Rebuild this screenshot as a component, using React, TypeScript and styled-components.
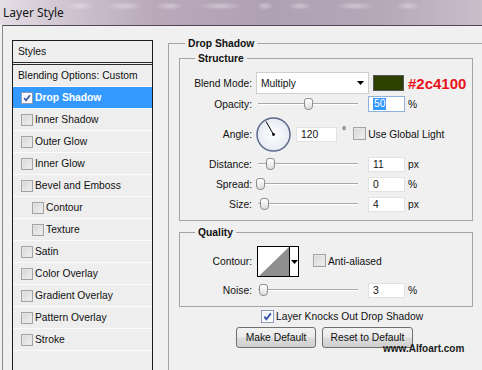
import React from "react";
import styled, { createGlobalStyle } from "styled-components";

const GlobalStyle = createGlobalStyle`
  html, body { margin: 0; padding: 0; background: #f0f0f0; overflow: hidden; }
  * { box-sizing: border-box; }
`;

const UI = `"Liberation Sans", Arial, sans-serif`;

const Window = styled.div`
  position: relative;
  width: 482px;
  height: 370px;
  overflow: hidden;
  display: flex;
  flex-direction: column;
  background: #f0f0f0;
  font-family: ${UI};
  font-size: 10.3px;
  color: #111;
`;

const TitleBar = styled.div`
  height: 25px;
  flex: none;
  display: flex;
  align-items: center;
  padding-left: 3px;
  background:
    radial-gradient(ellipse 14px 4px at 80px 6px, rgba(235, 228, 238, 0.55), transparent),
    radial-gradient(ellipse 18px 4px at 125px 6px, rgba(235, 228, 238, 0.55), transparent),
    radial-gradient(ellipse 14px 4px at 170px 6px, rgba(235, 228, 238, 0.5), transparent),
    radial-gradient(ellipse 22px 4px at 220px 6px, rgba(235, 228, 238, 0.5), transparent),
    radial-gradient(ellipse 8px 4px at 265px 6px, rgba(235, 228, 238, 0.5), transparent),
    radial-gradient(ellipse 12px 4px at 300px 6px, rgba(235, 228, 238, 0.5), transparent),
    radial-gradient(ellipse 20px 4px at 355px 6px, rgba(235, 228, 238, 0.5), transparent),
    radial-gradient(ellipse 12px 4px at 408px 6px, rgba(235, 228, 238, 0.5), transparent),
    linear-gradient(90deg, #e4dee5 0%, #d2c7d3 12%, #b9a9bb 32%, #b0a0b3 55%, #b5a6b8 78%, #c9bdca 100%);
  font-family: "Noto Sans", "Open Sans", sans-serif;
  font-size: 12px;
  color: #151515;
`;

const Frame = styled.div`
  flex: 1;
  margin-left: 2px;
  border-top: 1px solid #4f4a52;
  border-left: 1px solid #8a8a8a;
  display: flex;
  align-items: flex-start;
  gap: 15px;
  padding: 14px 0 0 9px;
`;

/* ---------- Styles list ---------- */

const StylesList = styled.div`
  width: 141px;
  height: 360px;
  flex: none;
  border: 1px solid #1c1c1c;
  background: #eeeeee;
  display: flex;
  flex-direction: column;
`;

const ListHeader = styled.div`
  height: 24px;
  line-height: 21px;
  padding-left: 5px;
  border-bottom: 3px double #2a2a2a;
`;

const ListRow = styled.div<{ $indent: number; $active?: boolean }>`
  height: 22px;
  display: flex;
  align-items: center;
  gap: 2px;
  padding-left: ${(p) => p.$indent}px;
  border-bottom: 1px solid #fbfbfb;
  background: ${(p) => (p.$active ? "#3399ff" : "transparent")};
  color: ${(p) => (p.$active ? "#fff" : "#111")};
  font-weight: ${(p) => (p.$active ? "bold" : "normal")};
`;

/* ---------- Checkbox ---------- */

const Box = styled.span<{ $size: number; $checked?: boolean }>`
  width: ${(p) => p.$size}px;
  height: ${(p) => p.$size}px;
  flex: none;
  display: inline-flex;
  align-items: center;
  justify-content: center;
  border: 1px solid ${(p) => (p.$checked ? "#8d9bb6" : "#a3a3a3")};
  background: ${(p) =>
    p.$checked
      ? "linear-gradient(135deg, #eef1f8, #ffffff)"
      : "linear-gradient(135deg, #d4d4d4, #f3f3f3)"};
  box-shadow: inset 0 0 0 1px ${(p) => (p.$checked ? "#ffffff" : "#e6e6e6")};
`;

const Check = ({ size = 13, checked = false }: { size?: number; checked?: boolean }) => (
  <Box $size={size} $checked={checked}>
    {checked && (
      <svg width={size - 4} height={size - 4} viewBox="0 0 9 9">
        <polyline points="1.3,4.6 3.4,7.2 7.8,1.4" fill="none" stroke="#3552a6" strokeWidth="1.8" />
      </svg>
    )}
  </Box>
);

/* ---------- Group boxes ---------- */

const Group = styled.fieldset<{ $w: number; $pl: number; $pt: number; $pb: number; $mt: number }>`
  margin: ${(p) => p.$mt}px 0 0 0;
  padding: ${(p) => p.$pt}px 0 ${(p) => p.$pb}px ${(p) => p.$pl}px;
  width: ${(p) => p.$w}px;
  min-width: 0;
  flex: none;
  border: 1px solid #a4a4a4;
  display: flex;
  flex-direction: column;
`;

const Legend = styled.legend<{ $ml: number }>`
  margin-left: ${(p) => p.$ml}px;
  padding: 0 3px;
  font-weight: bold;
  line-height: 13px;
  color: #111;
`;

const Row = styled.div<{ $h: number; $mt?: number }>`
  height: ${(p) => p.$h}px;
  margin-top: ${(p) => p.$mt ?? 0}px;
  display: flex;
  align-items: center;
  flex: none;
`;

const Label = styled.span`
  width: 72px;
  flex: none;
  text-align: right;
  margin-right: 4px;
`;

/* ---------- Controls ---------- */

const Select = styled.div`
  width: 113px;
  height: 22px;
  background: #fff;
  border: 1px solid #cfcfcf;
  display: flex;
  align-items: center;
  justify-content: space-between;
  padding: 0 4px 0 4px;
`;

const Swatch = styled.div<{ $color: string }>`
  width: 31px;
  height: 16px;
  margin-left: 4px;
  background: ${(p) => p.$color};
  border: 1px solid #555;
`;

const HexNote = styled.span`
  margin-left: 4px;
  font-family: ${UI};
  font-size: 15px;
  font-weight: bold;
  color: #e8141c;
`;

const Slider = styled.div`
  position: relative;
  width: 104px;
  height: 20px;
  flex: none;
`;

const Track = styled.div`
  position: absolute;
  left: 2px;
  right: 2px;
  top: 9px;
  height: 2px;
  border-top: 1px solid #a9a9a9;
  border-bottom: 1px solid #ffffff;
`;

const Thumb = styled.div`
  position: absolute;
  top: 4px;
  width: 9px;
  height: 12px;
  border: 1px solid #8c8c8c;
  border-radius: 3px 3px 4px 4px;
  background: linear-gradient(#ffffff, #dedede);
`;

const Field = styled.div<{ $w?: number; $h?: number; $focus?: boolean; $ml?: number }>`
  width: ${(p) => p.$w ?? 37}px;
  height: ${(p) => p.$h ?? 15}px;
  margin-left: ${(p) => p.$ml ?? 8}px;
  flex: none;
  background: #fff;
  border: 1px solid ${(p) => (p.$focus ? "#8fb2dc" : "#e2e2e2")};
  padding-left: 4px;
  display: flex;
  align-items: center;
`;

const Selected = styled.span`
  background: #3399ff;
  color: #fff;
  padding: 0 1px;
  line-height: 12px;
`;

const Unit = styled.span`
  margin-left: 3px;
`;

const Degree = styled.span`
  margin-left: 5px;
  margin-top: -9px;
`;

const CheckLabel = styled.span<{ $ml?: number }>`
  margin-left: ${(p) => p.$ml ?? 2}px;
`;

const ContourBox = styled.div`
  width: 42px;
  height: 31px;
  margin-left: 1px;
  border: 1px solid #000;
  background: #fff;
  display: flex;
`;

const ContourArrow = styled.div`
  flex: 1;
  border-left: 1px solid #000;
  display: flex;
  align-items: center;
  justify-content: center;
`;

const ButtonRow = styled.div`
  display: flex;
  gap: 6px;
  margin-top: 4px;
  padding-left: 57px;
`;

const Button = styled.button<{ $w: number }>`
  width: ${(p) => p.$w}px;
  height: 21px;
  border: 1px solid #707070;
  border-radius: 3px;
  background: linear-gradient(#f2f2f2 0%, #ebebeb 48%, #dddddd 52%, #cfcfcf 100%);
  font-family: ${UI};
  font-size: 10.3px;
  color: #111;
  padding: 0;
`;

const Watermark = styled.span`
  position: absolute;
  left: 383px;
  top: 343px;
  font-family: ${UI};
  font-size: 10px;
  font-weight: bold;
  line-height: 12px;
  color: #1a1a1a;
`;

const Arrow = () => (
  <svg width="7" height="4" viewBox="0 0 7 4">
    <polygon points="0,0 7,0 3.5,4" fill="#000" />
  </svg>
);

const SliderControl = ({ pct }: { pct: number }) => (
  <Slider>
    <Track />
    <Thumb style={{ left: `${Math.round(pct * 95)}px` }} />
  </Slider>
);

const Dial = ({ angle }: { angle: number }) => {
  const r = 15;
  const rad = (angle * Math.PI) / 180;
  const x = 17.5 + Math.cos(rad) * r;
  const y = 17.5 - Math.sin(rad) * r;
  return (
    <svg width="35" height="35" viewBox="0 0 35 35">
      <defs>
        <radialGradient id="dialfill" cx="50%" cy="50%" r="50%">
          <stop offset="0%" stopColor="#ffffff" />
          <stop offset="100%" stopColor="#e6eaf1" />
        </radialGradient>
      </defs>
      <circle cx="17.5" cy="17.5" r="16.5" fill="url(#dialfill)" stroke="#5b6a8c" strokeWidth="1.5" />
      <line x1="17.5" y1="17.5" x2={x} y2={y} stroke="#000" strokeWidth="1" />
      <circle cx="17.5" cy="17.5" r="1.4" fill="#000" />
    </svg>
  );
};

const ContourCurve = () => (
  <svg width="31" height="29" viewBox="0 0 31 29">
    <polygon points="1,29 31,0 31,29" fill="#8f8f8f" />
  </svg>
);

const styleItems: { name: string; indent: number; checked?: boolean; active?: boolean }[] = [
  { name: "Drop Shadow", indent: 8, checked: true, active: true },
  { name: "Inner Shadow", indent: 8 },
  { name: "Outer Glow", indent: 8 },
  { name: "Inner Glow", indent: 8 },
  { name: "Bevel and Emboss", indent: 8 },
  { name: "Contour", indent: 19 },
  { name: "Texture", indent: 19 },
  { name: "Satin", indent: 8 },
  { name: "Color Overlay", indent: 8 },
  { name: "Gradient Overlay", indent: 8 },
  { name: "Pattern Overlay", indent: 8 },
  { name: "Stroke", indent: 8 },
];

const SliderRow = ({
  label,
  pct,
  value,
  unit,
  mt,
}: {
  label: string;
  pct: number;
  value: string;
  unit: string;
  mt?: number;
}) => (
  <Row $h={20} $mt={mt}>
    <Label>{label}</Label>
    <SliderControl pct={pct} />
    <Field>{value}</Field>
    <Unit>{unit}</Unit>
  </Row>
);

export default function App() {
  return (
    <Window>
      <GlobalStyle />
      <TitleBar>Layer Style</TitleBar>
      <Frame>
        <StylesList>
          <ListHeader>Styles</ListHeader>
          <ListRow $indent={5}>Blending Options: Custom</ListRow>
          {styleItems.map((s) => (
            <ListRow key={s.name} $indent={s.indent} $active={s.active}>
              <Check size={12} checked={s.checked} />
              <span>{s.name}</span>
            </ListRow>
          ))}
        </StylesList>

        <Group $w={322} $pl={10} $pt={0} $pb={40} $mt={-3}>
          <Legend $ml={6}>Drop Shadow</Legend>

          <Group $w={294} $pl={0} $pt={7} $pb={6} $mt={2}>
            <Legend $ml={15}>Structure</Legend>
            <Row $h={22}>
              <Label>Blend Mode:</Label>
              <Select>
                <span>Multiply</span>
                <Arrow />
              </Select>
              <Swatch $color="#2c4100" />
              <HexNote>#2c4100</HexNote>
            </Row>
            <Row $h={20}>
              <Label>Opacity:</Label>
              <SliderControl pct={0.5} />
              <Field $h={16} $focus>
                <Selected>50</Selected>
              </Field>
              <Unit>%</Unit>
            </Row>
            <Row $h={35} $mt={3}>
              <Label>Angle:</Label>
              <Dial angle={120} />
              <Field $w={41} $ml={5}>120</Field>
              <Degree>°</Degree>
              <CheckLabel $ml={7}>
                <Check />
              </CheckLabel>
              <CheckLabel>Use Global Light</CheckLabel>
            </Row>
            <SliderRow label="Distance:" pct={0.1} value="11" unit="px" mt={2} />
            <SliderRow label="Spread:" pct={0} value="0" unit="%" />
            <SliderRow label="Size:" pct={0.04} value="4" unit="px" />
          </Group>

          <Group $w={294} $pl={0} $pt={7} $pb={6} $mt={5}>
            <Legend $ml={15}>Quality</Legend>
            <Row $h={31}>
              <Label>Contour:</Label>
              <ContourBox>
                <ContourCurve />
                <ContourArrow>
                  <Arrow />
                </ContourArrow>
              </ContourBox>
              <CheckLabel $ml={14}>
                <Check />
              </CheckLabel>
              <CheckLabel>Anti-aliased</CheckLabel>
            </Row>
            <SliderRow label="Noise:" pct={0.03} value="3" unit="%" mt={3} />
          </Group>

          <Row $h={13} $mt={3}>
            <CheckLabel $ml={82}>
              <Check checked />
            </CheckLabel>
            <CheckLabel>Layer Knocks Out Drop Shadow</CheckLabel>
          </Row>

          <ButtonRow>
            <Button $w={80}>Make Default</Button>
            <Button $w={91}>Reset to Default</Button>
          </ButtonRow>
        </Group>
      </Frame>
      <Watermark>www.Alfoart.com</Watermark>
    </Window>
  );
}
